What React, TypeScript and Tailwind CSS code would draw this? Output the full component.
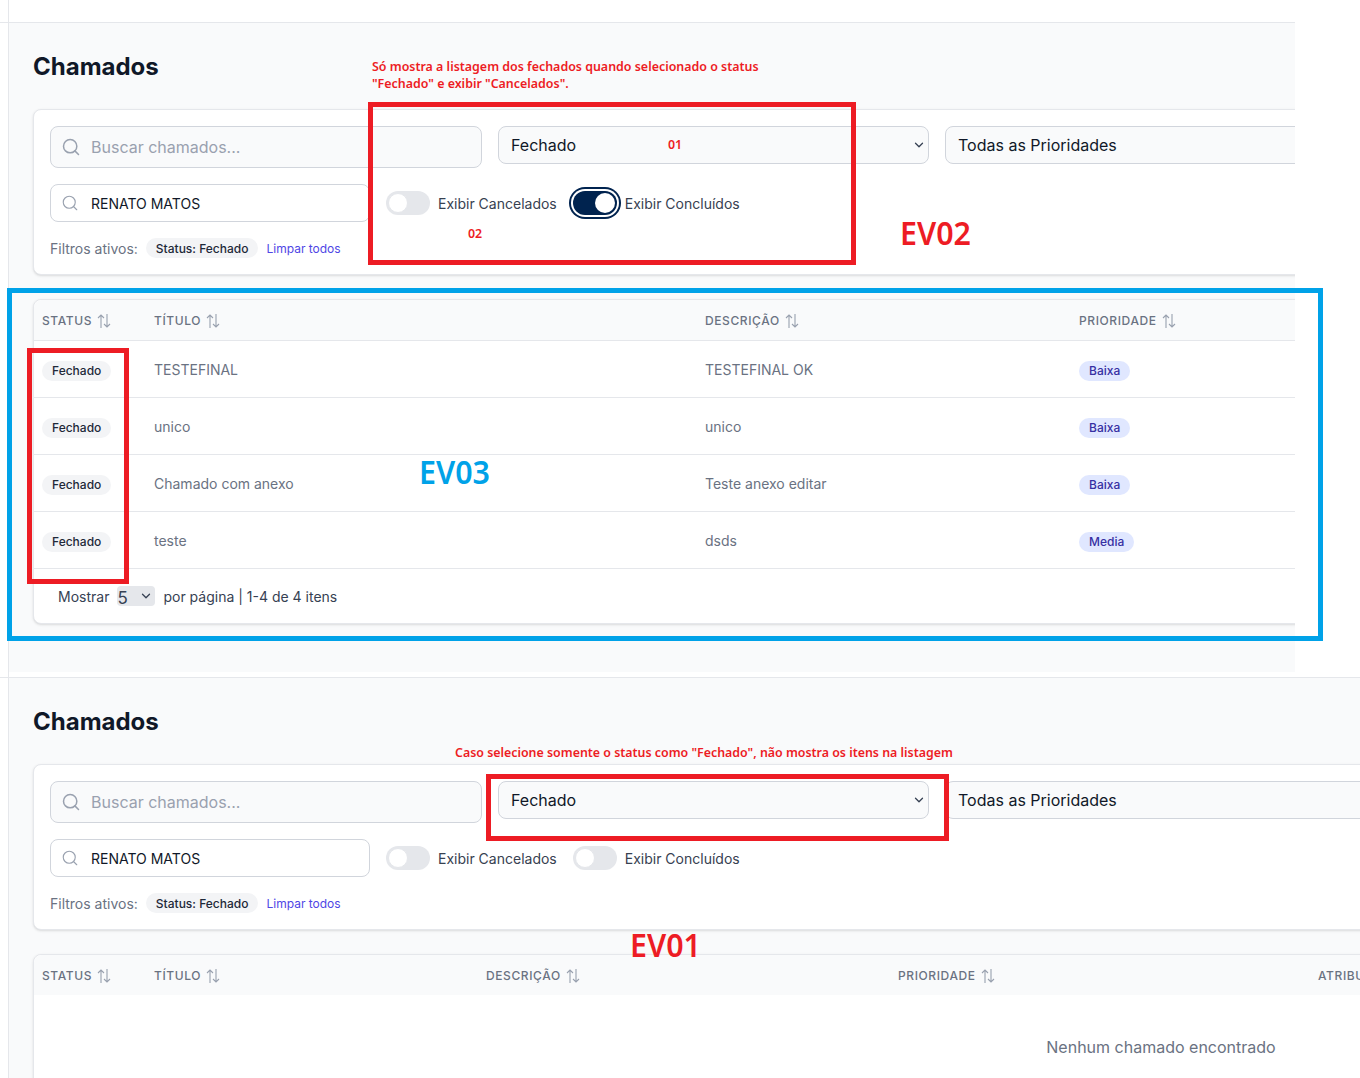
import { ChevronDown, Search } from "lucide-react";

const statusOptions = ["Fechado", "Aberto", "Em Andamento"];

function SortIcon() {
  return (
    <svg viewBox="0 0 14 14" fill="none" stroke="currentColor" strokeWidth="1.1" className="h-[14px] w-[14px] text-gray-400">
      <path d="M4 14V1M1 4l3-3 3 3" />
      <path d="M10 0v13M7 10l3 3 3-3" />
    </svg>
  );
}

function Toggle({ label, checked }: { label: string; checked?: boolean }) {
  return (
    <label className="flex items-center gap-2">
      {checked ? (
        <span className="flex h-6 w-11 items-center justify-end rounded-full bg-[#00234f] px-[2px] ring-2 ring-[#00234f] ring-offset-2">
          <span className="h-5 w-5 rounded-full bg-white" />
        </span>
      ) : (
        <span className="flex h-6 w-11 items-center rounded-full bg-[#e5e7eb] px-[2px]">
          <span className="h-5 w-5 rounded-full border border-gray-200 bg-white" />
        </span>
      )}
      <span className="mt-[2px] text-sm text-[#374151]">{label}</span>
    </label>
  );
}

function Select({ className, children }: { className: string; children: React.ReactNode }) {
  return (
    <div className="relative">
      <select className={`h-[38px] w-full appearance-none rounded-lg border border-gray-300 bg-gray-50 text-base text-gray-900 ${className}`}>
        {children}
      </select>
      <ChevronDown size={14} strokeWidth={2.2} className="absolute top-[12px] right-[3px] text-gray-700" />
    </div>
  );
}

function Filters({ concluidos }: { concluidos?: boolean }) {
  return (
    <div className="w-[1394px] rounded-lg border border-gray-200 bg-white p-4 shadow-sm">
      <div className="grid grid-cols-[432px_431px_1fr] items-start gap-4">
        <div className="relative">
          <Search size={20} strokeWidth={1.8} className="absolute top-[11px] left-[11px] text-gray-400" />
          <input
            placeholder="Buscar chamados..."
            className="h-[42px] w-full rounded-lg border border-gray-300 bg-gray-50 pr-3 pl-10 text-base text-gray-900 placeholder:text-gray-400"
          />
        </div>
        <Select className="px-3">
          {statusOptions.map((s) => (
            <option key={s}>{s}</option>
          ))}
        </Select>
        <Select className="pl-3">
          <option>Todas as Prioridades</option>
        </Select>
      </div>
      <div className="mt-4 flex items-center gap-4">
        <div className="relative w-80">
          <Search size={18} strokeWidth={1.5} className="absolute top-[10px] left-[11px] text-gray-400" />
          <input
            readOnly
            value="RENATO MATOS"
            className="h-[38px] w-full rounded-lg border border-gray-300 bg-white pr-3 pl-10 text-sm text-gray-900"
          />
        </div>
        <Toggle label="Exibir Cancelados" />
        <Toggle label="Exibir Concluídos" checked={concluidos} />
      </div>
      <div className="mt-4 flex h-5 items-center">
        <span className="mt-[2px] text-sm text-gray-500">Filtros ativos:</span>
        <span className="ml-2 rounded-full bg-gray-100 px-[10px] pt-[3px] pb-[1px] text-xs font-medium text-gray-800">Status: Fechado</span>
        <span className="mt-[2px] ml-2 text-xs text-[#4f46e5]">Limpar todos</span>
      </div>
    </div>
  );
}

function Th({ label }: { label: string }) {
  return (
    <div className="flex items-center gap-[5px] text-xs font-medium tracking-wider whitespace-nowrap text-gray-500 uppercase">
      {label}
      <SortIcon />
    </div>
  );
}

const rows = [
  { titulo: "TESTEFINAL", descricao: "TESTEFINAL OK", prioridade: "Baixa" },
  { titulo: "unico", descricao: "unico", prioridade: "Baixa" },
  { titulo: "Chamado com anexo", descricao: "Teste anexo editar", prioridade: "Baixa" },
  { titulo: "teste", descricao: "dsds", prioridade: "Media" },
];

function FilledTable() {
  return (
    <div className="w-[1394px] rounded-lg border border-gray-200 bg-white shadow-sm">
      <div className="grid h-[41px] grid-cols-[112px_551px_374px_1fr] items-center rounded-t-lg border-b border-gray-200 bg-gray-50 pt-[2px] pl-2">
        <Th label="Status" />
        <Th label="Título" />
        <Th label="Descrição" />
        <Th label="Prioridade" />
      </div>
      {rows.map((r) => (
        <div key={r.titulo} className="grid h-[57px] grid-cols-[112px_551px_374px_1fr] items-center border-b border-gray-200 pt-[4px] pl-2 text-sm text-gray-500">
          <div className="flex">
            <span className="rounded-full bg-gray-100 px-[10px] py-[2px] text-xs font-medium text-gray-800">Fechado</span>
          </div>
          <div className="-mt-[2px]">{r.titulo}</div>
          <div className="-mt-[2px]">{r.descricao}</div>
          <div className="flex">
            <span className="rounded-full bg-[#e0e7ff] px-[10px] py-[2px] text-xs font-medium text-[#3730a3]">{r.prioridade}</span>
          </div>
        </div>
      ))}
      <div className="flex h-[54px] items-center pt-[1px] pl-6 text-sm text-gray-700">
        Mostrar
        <div className="relative mx-2 -mt-[1px] h-5 w-[38px]">
          <select className="h-5 w-full appearance-none rounded-sm bg-gray-200 text-[17px] text-gray-700">
            <option>5</option>
          </select>
          <ChevronDown size={14} strokeWidth={2.2} className="absolute top-[3px] right-[2px] text-gray-700" />
        </div>
        por página | 1-4 de 4 itens
      </div>
    </div>
  );
}

function EmptyTable() {
  return (
    <div className="w-[2256px] rounded-lg border border-gray-200 bg-white shadow-sm">
      <div className="grid h-10 grid-cols-[112px_332px_412px_420px_1fr] items-center rounded-t-lg bg-gray-50 pt-[2px] pl-2">
        <Th label="Status" />
        <Th label="Título" />
        <Th label="Descrição" />
        <Th label="Prioridade" />
        <Th label="Atribuído" />
      </div>
      <div className="py-10 text-center text-base text-gray-500">Nenhum chamado encontrado</div>
    </div>
  );
}

function Page({ concluidos, children }: { concluidos?: boolean; children: React.ReactNode }) {
  return (
    <div className="h-full overflow-hidden border-t border-gray-200 pl-2">
      <div className="h-full overflow-hidden border-l border-gray-200 bg-gray-50 px-6 pt-7">
        <h1 className="mb-[26px] text-2xl leading-8 font-bold text-gray-900">Chamados</h1>
        <Filters concluidos={concluidos} />
        <div className="mt-6">{children}</div>
      </div>
    </div>
  );
}

function Box({ className }: { className: string }) {
  return <div className={`pointer-events-none absolute border-[5px] ${className}`} />;
}

function Note({ className, children }: { className: string; children: React.ReactNode }) {
  return <div className={`absolute font-['Noto_Sans',sans-serif] font-semibold whitespace-nowrap ${className}`}>{children}</div>;
}

export default function App() {
  return (
    <div className="relative h-[1078px] w-[1360px] overflow-hidden bg-white font-['Inter',sans-serif]">
      <div className="h-[22px] pl-2">
        <div className="h-full border-l border-gray-200" />
      </div>
      <div className="h-[650px] w-[1295px]">
        <Page concluidos>
          <FilledTable />
        </Page>
      </div>
      <div className="h-[5px] pl-2">
        <div className="h-full border-l border-gray-200" />
      </div>
      <div className="h-[401px]">
        <Page>
          <EmptyTable />
        </Page>
      </div>

      <Box className="top-[102px] left-[368px] h-[163px] w-[488px] border-[#ed1c24]" />
      <Box className="top-[288px] left-[7px] h-[353px] w-[1316px] border-[#00a2e8]" />
      <Box className="top-[348px] left-[27px] h-[236px] w-[102px] border-[#ed1c24]" />
      <Box className="top-[774px] left-[486px] h-[67px] w-[463px] border-[#ed1c24]" />

      <Note className="top-[58px] left-[372px] text-[12.43px] leading-[17px] text-[#ed1c24]">
        Só mostra a listagem dos fechados quando selecionado o status
        <br />
        "Fechado" e exibir "Cancelados".
      </Note>
      <Note className="top-[744px] left-[455px] text-[12.4px] leading-[17px] text-[#ed1c24]">
        Caso selecione somente o status como "Fechado", não mostra os itens na listagem
      </Note>
      <Note className="top-[136px] left-[668px] text-[12.4px] leading-[17px] text-[#ed1c24]">01</Note>
      <Note className="top-[225px] left-[468px] text-[12.4px] leading-[17px] text-[#ed1c24]">02</Note>
      <Note className="top-[211px] left-[900px] origin-left scale-x-95 text-[32px] leading-[44px] text-[#ed1c24]">EV02</Note>
      <Note className="top-[450px] left-[419px] origin-left scale-x-95 text-[32px] leading-[44px] text-[#00a2e8]">EV03</Note>
      <Note className="top-[923px] left-[630px] origin-left scale-x-95 text-[32px] leading-[44px] text-[#ed1c24]">EV01</Note>
    </div>
  );
}
